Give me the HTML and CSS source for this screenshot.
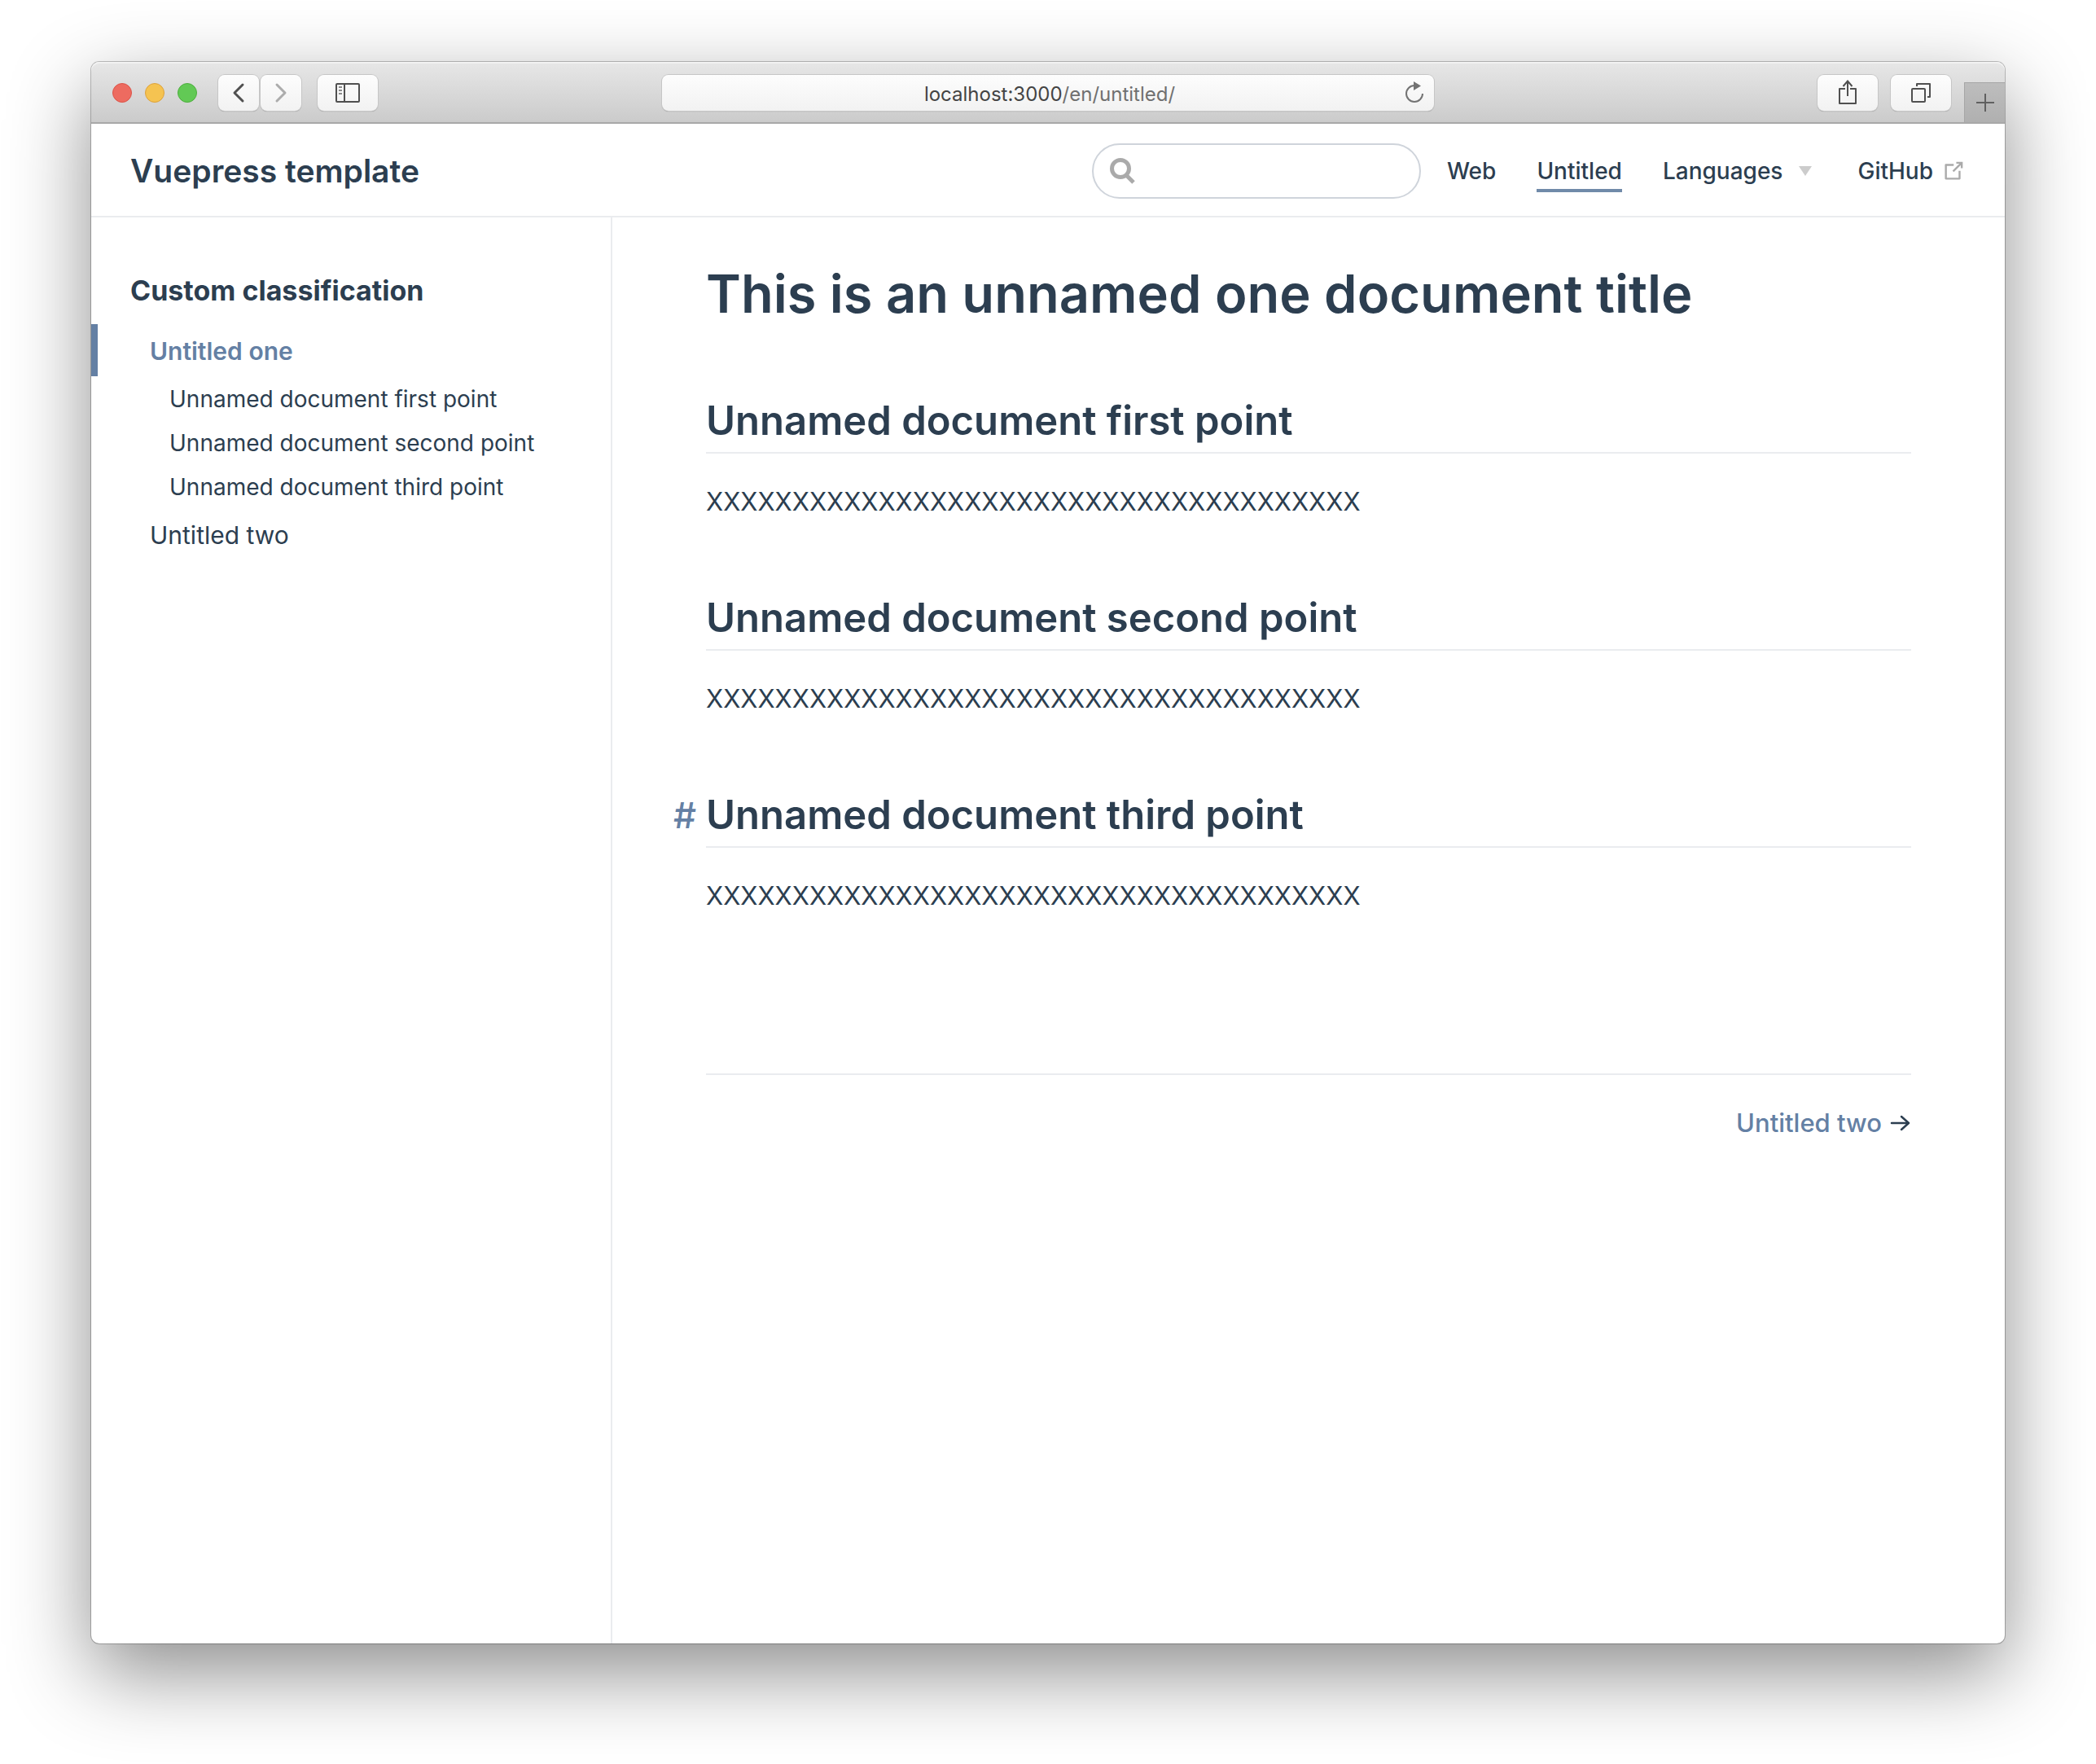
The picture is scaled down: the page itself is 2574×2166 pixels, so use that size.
FILE: index.html
```html
<!DOCTYPE html>
<html lang="en">
<head>
<meta charset="utf-8">
<meta name="viewport" content="width=device-width, initial-scale=1">
<title>Vuepress template</title>
<link rel="stylesheet" href="styles.css">
</head>
<body>
<div class="window">
  <div class="toolbar">
    <div class="toolbar-start">
      <div class="lights">
        <button class="light light-close" aria-label="Close"></button>
        <button class="light light-minimize" aria-label="Minimize"></button>
        <button class="light light-zoom" aria-label="Zoom"></button>
      </div>
      <div class="history">
        <button class="tool tool-small" aria-label="Back">
          <svg width="16" height="26" viewBox="0 0 16 26"><path d="M13 3 3 13l10 10" fill="none" stroke="#505050" stroke-width="3" stroke-linecap="round" stroke-linejoin="round"/></svg>
        </button>
        <button class="tool tool-small" aria-label="Forward">
          <svg width="16" height="26" viewBox="0 0 16 26"><path d="M3 3l10 10L3 23" fill="none" stroke="#acacac" stroke-width="3" stroke-linecap="round" stroke-linejoin="round"/></svg>
        </button>
      </div>
      <button class="tool" aria-label="Show sidebar">
        <svg width="30" height="24" viewBox="0 0 30 24" fill="none"><rect x="1" y="1" width="28" height="22" rx="1" stroke="#505050" stroke-width="2"/><path d="M11 1v22" stroke="#505050" stroke-width="2"/><path d="M4 5h4M4 9h4M4 13h4" stroke="#8a8a8a" stroke-width="2"/></svg>
      </button>
    </div>
    <div class="address">
      <button class="address-url"><span class="address-host">localhost:3000</span>/en/untitled/</button>
      <button class="reload" aria-label="Reload">
        <svg width="24" height="28" viewBox="0 0 24 28"><path d="M12 5A10 10 0 1 0 22 15" fill="none" stroke="#737373" stroke-width="2"/><path d="M11 0v11l9-5.500z" fill="#737373"/></svg>
      </button>
    </div>
    <div class="toolbar-end">
      <button class="tool" aria-label="Share">
        <svg width="24" height="32" viewBox="0 0 24 32" fill="none" stroke="#505050" stroke-width="2"><path d="M9 11H2v18h20V11h-7" stroke-linejoin="round"/><path d="M12 20V2M6.500 8 12 1.500l5.500 6.500"/></svg>
      </button>
      <button class="tool" aria-label="Show all tabs">
        <svg width="26" height="26" viewBox="0 0 26 26" fill="none" stroke="#505050" stroke-width="2" stroke-linejoin="round"><rect x="2" y="8" width="16" height="16" rx="1"/><path d="M8 5V2h16v16h-3"/></svg>
      </button>
      <button class="new-tab" aria-label="New tab">
        <svg width="22" height="22" viewBox="0 0 22 22"><path d="M11 0v22M0 11h22" stroke="#606060" stroke-width="2"/></svg>
      </button>
    </div>
  </div>

  <header class="navbar">
    <a class="site-name" href="#">Vuepress template</a>
    <label class="search">
      <svg width="32" height="34" viewBox="0 0 32 34" fill="none" stroke="#aaa"><circle cx="13" cy="14" r="10.500" stroke-width="5"/><path d="m20 22 9 9" stroke-width="5"/></svg>
      <input class="search-input" type="text" aria-label="Search">
    </label>
    <nav class="nav-links">
      <a class="nav-link" href="#">Web</a>
      <a class="nav-link nav-link-active" href="#">Untitled</a>
      <button class="nav-link nav-menu">Languages
        <svg width="16" height="12" viewBox="0 0 16 12"><path d="M0 0h16L8 12z" fill="#ccc"/></svg>
      </button>
      <a class="nav-link nav-external" href="#">GitHub
        <svg width="30" height="30" viewBox="0 0 100 100"><path fill="#aaa" d="M18.800 85.100h56c2.200 0 4-1.800 4-4v-32h-8v28h-48v-48h28v-8h-32c-2.200 0-4 1.800-4 4v56c0 2.200 1.800 4 4 4zM45.700 48.700l5.600 5.600 28.500-28.500v12.700h8v-26.300h-26.300v8h12.600z"/></svg>
      </a>
    </nav>
  </header>

  <div class="body">
    <aside class="sidebar">
      <p class="sidebar-heading">Custom classification</p>
      <ul class="sidebar-links">
        <li>
          <a class="sidebar-link sidebar-link-active" href="#">Untitled one</a>
          <ul class="sidebar-sub">
            <li><a class="sub-link" href="#first">Unnamed document first point</a></li>
            <li><a class="sub-link" href="#second">Unnamed document second point</a></li>
            <li><a class="sub-link" href="#third">Unnamed document third point</a></li>
          </ul>
        </li>
        <li><a class="sidebar-link" href="#">Untitled two</a></li>
      </ul>
    </aside>

    <main class="page">
      <div class="content">
        <h1 class="title">This is an unnamed one document title</h1>
        <h2 class="section-title" id="first">Unnamed document first point</h2>
        <p class="text">XXXXXXXXXXXXXXXXXXXXXXXXXXXXXXXXXXXXXX</p>
        <h2 class="section-title" id="second">Unnamed document second point</h2>
        <p class="text">XXXXXXXXXXXXXXXXXXXXXXXXXXXXXXXXXXXXXX</p>
        <h2 class="section-title" id="third"><a class="anchor" href="#third">#</a>Unnamed document third point</h2>
        <p class="text">XXXXXXXXXXXXXXXXXXXXXXXXXXXXXXXXXXXXXX</p>
        <div class="page-nav">
          <a class="next" href="#">Untitled two</a>
          <svg width="26" height="20" viewBox="0 0 26 20"><path d="M2 10h21M14 2l9 8-9 8" fill="none" stroke="#2c3e50" stroke-width="2.500" stroke-linecap="round" stroke-linejoin="round"/></svg>
        </div>
      </div>
    </main>
  </div>
</div>
</body>
</html>
```
FILE: styles.css
```css
* {
  box-sizing: border-box;
}

body {
  margin: 0;
  padding: 76px 112px 148px;
  background: #fff;
  color: #2c3e50;
  font-family: Inter, "Liberation Sans", sans-serif;
  font-size: 31px;
}

a {
  color: inherit;
  text-decoration: none;
}

button {
  margin: 0;
  padding: 0;
  border: 0;
  background: none;
  color: inherit;
  font: inherit;
}

svg {
  display: block;
  flex: none;
}

ul {
  margin: 0;
  padding: 0;
  list-style: none;
}

.window {
  display: flex;
  flex-direction: column;
  min-height: calc(100vh - 224px);
  border-radius: 10px;
  background: #fff;
  box-shadow: 0 0 0 1px rgba(0, 0, 0, 0.24), 0 36px 100px rgba(0, 0, 0, 0.45);
}

/* Browser toolbar */
.toolbar {
  display: grid;
  grid-template-columns: minmax(0, 1fr) minmax(0, 948px) minmax(0, 1fr);
  align-items: center;
  height: 76px;
  padding-top: 2px;
  border-bottom: 2px solid #a8a8a8;
  border-radius: 10px 10px 0 0;
  background: linear-gradient(#e7e7e7, #cbcbcb);
  box-shadow: inset 0 2px 0 #f2f2f2;
}

.toolbar-start {
  display: flex;
  align-items: center;
  gap: 20px;
  padding-left: 26px;
}

.lights {
  display: flex;
  gap: 16px;
  margin-right: 6px;
}

.light {
  width: 24px;
  height: 24px;
  border: 1px solid;
  border-radius: 50%;
}

.light-close {
  border-color: #dc5348;
  background: #ed6b60;
}

.light-minimize {
  border-color: #dda23b;
  background: #f5c351;
}

.light-zoom {
  border-color: #4dae3d;
  background: #62c955;
}

.history {
  display: flex;
  gap: 2px;
}

.tool {
  display: flex;
  align-items: center;
  justify-content: center;
  width: 74px;
  height: 44px;
  border-radius: 8px;
  background: linear-gradient(#fdfdfd, #f2f2f2);
  box-shadow: 0 0 0 1px #c6c6c6, 0 1px 1px #8c8c8c;
}

.tool-small {
  width: 50px;
}

.address {
  display: flex;
  align-items: center;
  height: 44px;
  padding: 0 12px 0 36px;
  border-radius: 8px;
  background: linear-gradient(#fdfdfd, #f2f2f2);
  box-shadow: 0 0 0 1px #c6c6c6, 0 1px 1px #8c8c8c;
}

.address-url {
  flex: 1;
  padding: 2px 0 0 4px;
  color: #707070;
  font-size: 24px;
}

.address-host {
  color: #444;
}

.toolbar-end {
  display: flex;
  align-self: stretch;
  align-items: center;
  justify-content: flex-end;
  gap: 16px;
}

.new-tab {
  display: flex;
  align-items: center;
  justify-content: center;
  align-self: flex-end;
  width: 50px;
  height: 49px;
  border-top: 1px solid #a6a6a6;
  border-left: 1px solid #a6a6a6;
  background: linear-gradient(#bdbdbd, #b0b0b0);
}

/* Site header */
.navbar {
  display: flex;
  align-items: center;
  height: 115px;
  padding: 2px 48px 0;
  border-bottom: 2px solid #eaecef;
}

.site-name {
  margin-right: auto;
  font-size: 39px;
  font-weight: 600;
}

.search {
  display: flex;
  align-items: center;
  gap: 8px;
  width: 404px;
  height: 68px;
  margin-right: 32px;
  padding: 0 20px;
  border: 2px solid #cfd4db;
  border-radius: 34px;
}

.search-input {
  flex: 1;
  min-width: 0;
  border: 0;
  outline: 0;
  background: none;
  color: inherit;
  font: inherit;
}

.nav-links {
  display: flex;
  align-items: center;
  gap: 50px;
}

.nav-link {
  display: flex;
  align-items: center;
  height: 52px;
  border-top: 4px solid transparent;
  border-bottom: 4px solid transparent;
  font-size: 28px;
  font-weight: 500;
}

.nav-link-active {
  border-bottom-color: #708aa9;
}

.nav-menu {
  gap: 20px;
  margin-right: 6px;
}

.nav-external {
  gap: 10px;
}

/* Sidebar and page */
.body {
  display: flex;
  flex: 1;
}

.sidebar {
  flex: none;
  width: 640px;
  padding-top: 66px;
  border-right: 2px solid #eaecef;
}

.sidebar-heading {
  margin: 0 48px 17px;
  font-size: 34px;
  font-weight: 700;
  line-height: 48px;
}

.sidebar-link {
  display: block;
  padding: 2px 0 0 64px;
  border-left: 8px solid transparent;
  font-size: 30px;
  line-height: 62px;
}

.sidebar-link-active {
  border-left-color: #6480a4;
  color: #6480a4;
  font-weight: 600;
}

.sub-link {
  display: block;
  padding: 2px 0 0 96px;
  font-size: 28px;
  line-height: 52px;
}

.page {
  flex: 1;
  min-width: 0;
}

.content {
  max-width: 1480px;
  margin: 0 auto;
  padding-top: 54px;
}

.title {
  margin: 0;
  font-size: 65px;
  font-weight: 600;
  line-height: 80px;
}

.section-title {
  position: relative;
  margin: 86px 0 32px;
  padding-bottom: 8px;
  border-bottom: 2px solid #eaecef;
  font-size: 49px;
  font-weight: 600;
  line-height: 60px;
}

.anchor {
  position: absolute;
  right: 100%;
  padding-right: 12px;
  color: #6480a4;
  font-size: 44px;
  font-weight: 500;
}

.text {
  margin: 0;
  line-height: 54px;
}

.page-nav {
  display: flex;
  align-items: center;
  justify-content: flex-end;
  gap: 10px;
  margin-top: 191px;
  padding-top: 32px;
  border-top: 2px solid #eaecef;
  line-height: 54px;
}

.next {
  color: #6480a4;
  font-weight: 500;
}
```
